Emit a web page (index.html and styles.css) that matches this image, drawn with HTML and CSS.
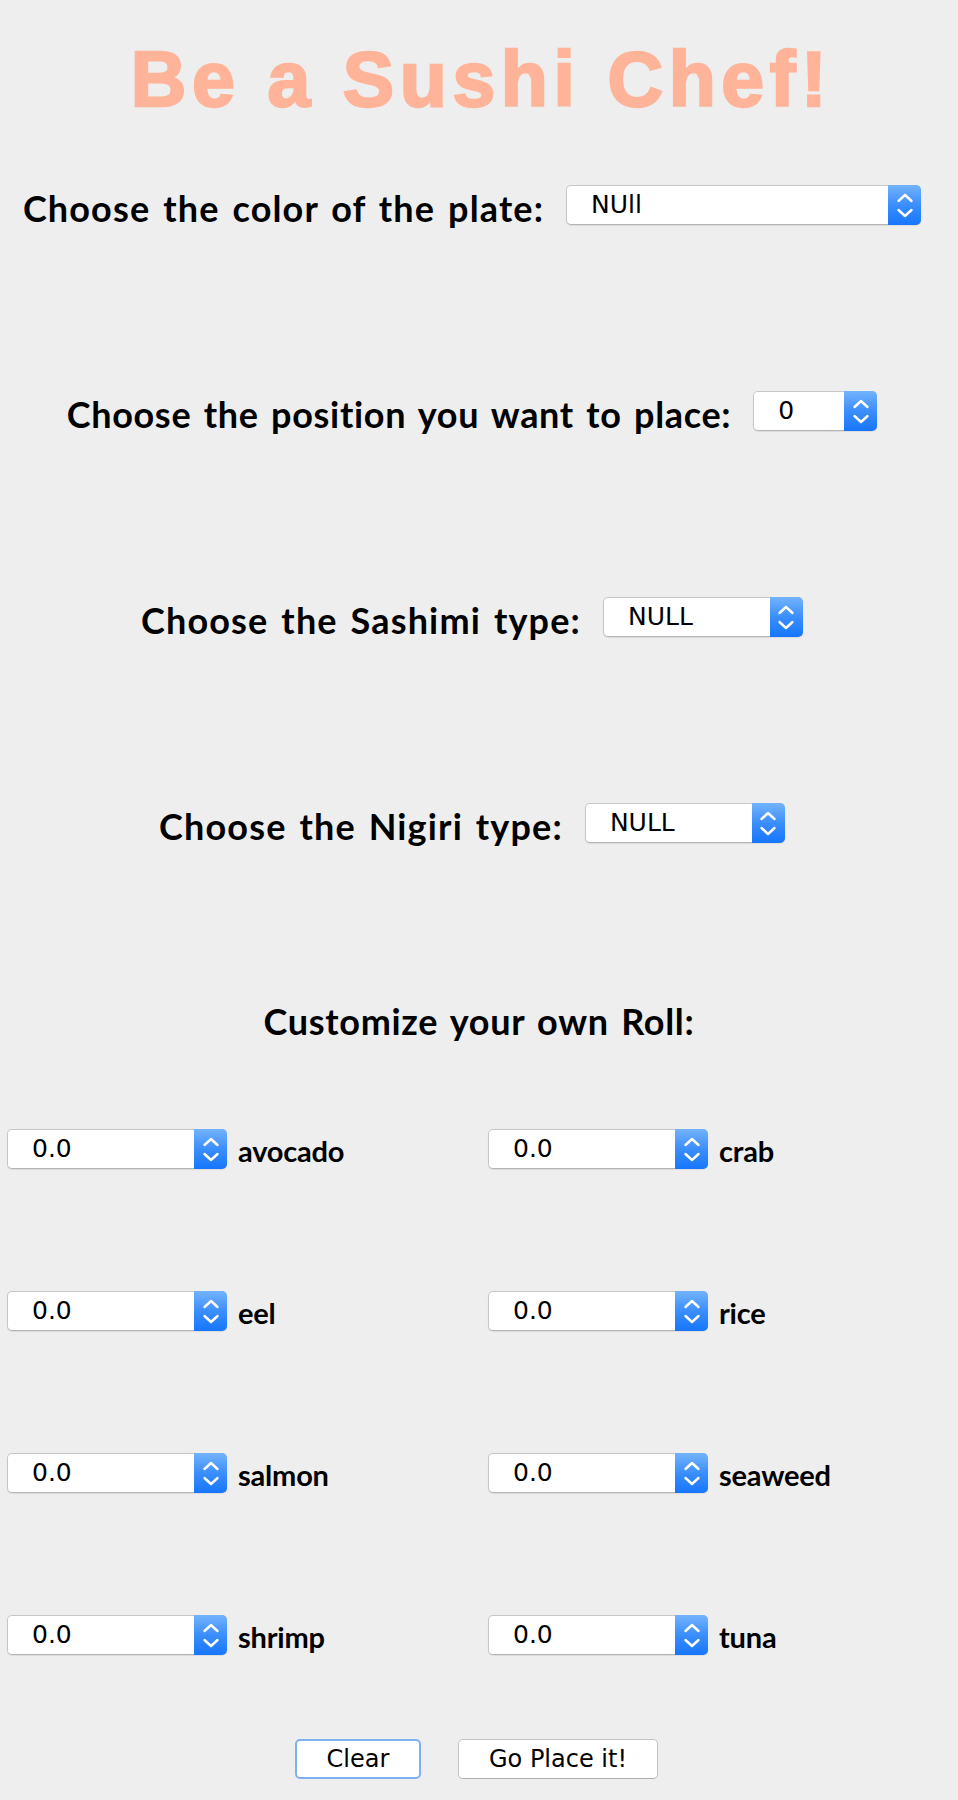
FILE: index.html
```html
<!DOCTYPE html>
<html>
<head>
<meta charset="utf-8">
<title>Be a Sushi Chef!</title>
<link rel="stylesheet" href="styles.css">
</head>
<body>
<div class="page">
  <h1 class="title">Be a Sushi Chef!</h1>

  <div class="row row-plate">
    <span class="label">Choose the color of the plate:</span>
    <div class="select w-plate"><span class="value">NUll</span><span class="stepper"><svg viewBox="0 0 32 39" width="32" height="39"><polyline points="9.5,15 16,9 22.5,15"/><polyline points="9.5,24 16,30 22.5,24"/></svg></span></div>
  </div>

  <div class="row row-gap">
    <span class="label label-tight">Choose the position you want to place:</span>
    <div class="select w-pos"><span class="value">0</span><span class="stepper"><svg viewBox="0 0 32 39" width="32" height="39"><polyline points="9.5,15 16,9 22.5,15"/><polyline points="9.5,24 16,30 22.5,24"/></svg></span></div>
  </div>

  <div class="row row-gap">
    <span class="label">Choose the Sashimi type:</span>
    <div class="select w-type"><span class="value">NULL</span><span class="stepper"><svg viewBox="0 0 32 39" width="32" height="39"><polyline points="9.5,15 16,9 22.5,15"/><polyline points="9.5,24 16,30 22.5,24"/></svg></span></div>
  </div>

  <div class="row row-gap">
    <span class="label">Choose the Nigiri type:</span>
    <div class="select w-type"><span class="value">NULL</span><span class="stepper"><svg viewBox="0 0 32 39" width="32" height="39"><polyline points="9.5,15 16,9 22.5,15"/><polyline points="9.5,24 16,30 22.5,24"/></svg></span></div>
  </div>

  <h2 class="subtitle">Customize your own Roll:</h2>

  <div class="roll">
    <div class="item"><div class="select w-roll"><span class="value">0.0</span><span class="stepper"><svg viewBox="0 0 32 39" width="32" height="39"><polyline points="9.5,15 16,9 22.5,15"/><polyline points="9.5,24 16,30 22.5,24"/></svg></span></div><span class="ing">avocado</span></div>
    <div class="item"><div class="select w-roll"><span class="value">0.0</span><span class="stepper"><svg viewBox="0 0 32 39" width="32" height="39"><polyline points="9.5,15 16,9 22.5,15"/><polyline points="9.5,24 16,30 22.5,24"/></svg></span></div><span class="ing">crab</span></div>
    <div class="item"><div class="select w-roll"><span class="value">0.0</span><span class="stepper"><svg viewBox="0 0 32 39" width="32" height="39"><polyline points="9.5,15 16,9 22.5,15"/><polyline points="9.5,24 16,30 22.5,24"/></svg></span></div><span class="ing">eel</span></div>
    <div class="item"><div class="select w-roll"><span class="value">0.0</span><span class="stepper"><svg viewBox="0 0 32 39" width="32" height="39"><polyline points="9.5,15 16,9 22.5,15"/><polyline points="9.5,24 16,30 22.5,24"/></svg></span></div><span class="ing">rice</span></div>
    <div class="item"><div class="select w-roll"><span class="value">0.0</span><span class="stepper"><svg viewBox="0 0 32 39" width="32" height="39"><polyline points="9.5,15 16,9 22.5,15"/><polyline points="9.5,24 16,30 22.5,24"/></svg></span></div><span class="ing">salmon</span></div>
    <div class="item"><div class="select w-roll"><span class="value">0.0</span><span class="stepper"><svg viewBox="0 0 32 39" width="32" height="39"><polyline points="9.5,15 16,9 22.5,15"/><polyline points="9.5,24 16,30 22.5,24"/></svg></span></div><span class="ing">seaweed</span></div>
    <div class="item"><div class="select w-roll"><span class="value">0.0</span><span class="stepper"><svg viewBox="0 0 32 39" width="32" height="39"><polyline points="9.5,15 16,9 22.5,15"/><polyline points="9.5,24 16,30 22.5,24"/></svg></span></div><span class="ing">shrimp</span></div>
    <div class="item"><div class="select w-roll"><span class="value">0.0</span><span class="stepper"><svg viewBox="0 0 32 39" width="32" height="39"><polyline points="9.5,15 16,9 22.5,15"/><polyline points="9.5,24 16,30 22.5,24"/></svg></span></div><span class="ing">tuna</span></div>
  </div>

  <div class="buttons">
    <button class="btn btn-clear">Clear</button>
    <button class="btn btn-go">Go Place it!</button>
  </div>
</div>
</body>
</html>
```

FILE: styles.css
```css
html, body {
  margin: 0;
  padding: 0;
  background: #eeeeee;
}

.page {
  width: 958px;
  height: 1800px;
  display: flex;
  flex-direction: column;
  align-items: stretch;
}

.title {
  margin: 34px 0 0 0;
  font-family: "Liberation Sans", Arial, sans-serif;
  font-weight: bold;
  font-size: 77px;
  line-height: 90px;
  letter-spacing: 5.6px;
  color: #ffb499;
  -webkit-text-stroke: 2.4px #ffb499;
  text-align: center;
  padding-left: 5px;
}

.row {
  display: flex;
  justify-content: center;
  align-items: flex-start;
  gap: 22px;
  height: 40px;
  padding-right: 14px;
}

.row-plate { margin-top: 61px; }
.row-gap { margin-top: 166px; }

.label {
  font-family: "Comic Sans MS", "Lato", sans-serif;
  font-weight: bold;
  font-size: 36px;
  line-height: 40px;
  padding-top: 3px;
  color: #000;
  white-space: nowrap;
  letter-spacing: 1.15px;
  word-spacing: 3px;
}

.label-tight { letter-spacing: 0.68px; }

.select {
  box-sizing: border-box;
  height: 40px;
  display: flex;
  background: #ffffff;
  border: 1px solid #c6c6c6;
  border-bottom-color: #b4b4b4;
  border-radius: 5px;
  box-shadow: 0 1px 1px rgba(0, 0, 0, 0.08);
  flex-shrink: 0;
}

.w-plate { width: 355px; }
.w-pos { width: 124px; }
.w-type { width: 200px; }
.w-roll { width: 220px; }

.value {
  flex: 1;
  padding-left: 24px;
  font-family: "DejaVu Sans", Verdana, sans-serif;
  font-size: 25px;
  line-height: 38px;
  color: #000;
  white-space: nowrap;
}

.stepper {
  width: 33px;
  margin: -1px -1px -1px 0;
  border-radius: 0 5px 5px 0;
  background: linear-gradient(#73b3fc, #3b8efc 50%, #1676fc);
  display: flex;
  align-items: center;
  justify-content: center;
}

.stepper svg polyline {
  fill: none;
  stroke: #ffffff;
  stroke-width: 2.4;
  stroke-linecap: round;
  stroke-linejoin: round;
}

.subtitle {
  margin: 156px 0 0 0;
  font-family: "Comic Sans MS", "Lato", sans-serif;
  font-weight: bold;
  font-size: 36px;
  line-height: 44px;
  letter-spacing: 0.7px;
  word-spacing: 3px;
  text-align: center;
  color: #000;
}

.roll {
  margin-top: 86px;
  padding-left: 7px;
  display: grid;
  grid-template-columns: 481px 1fr;
  row-gap: 122px;
}

.item {
  display: flex;
  align-items: flex-start;
  gap: 11px;
  height: 40px;
}

.ing {
  font-family: "Comic Sans MS", "Lato", sans-serif;
  font-weight: bold;
  font-size: 29px;
  line-height: 40px;
  padding-top: 2px;
  color: #000;
  letter-spacing: -0.2px;
}

.buttons {
  margin-top: 84px;
  display: flex;
  justify-content: center;
  gap: 37px;
  padding-right: 5px;
}

.btn {
  box-sizing: border-box;
  height: 40px;
  padding: 0;
  background: #ffffff;
  border: 1px solid #c4c4c4;
  border-bottom-color: #aeaeae;
  border-radius: 5px;
  font-family: "DejaVu Sans", Verdana, sans-serif;
  font-size: 24px;
  line-height: 38px;
  color: #000;
  text-align: center;
}

.btn-clear {
  width: 126px;
  border: 2px solid #7fb1ee;
  line-height: 36px;
}

.btn-go { width: 200px; }
```
